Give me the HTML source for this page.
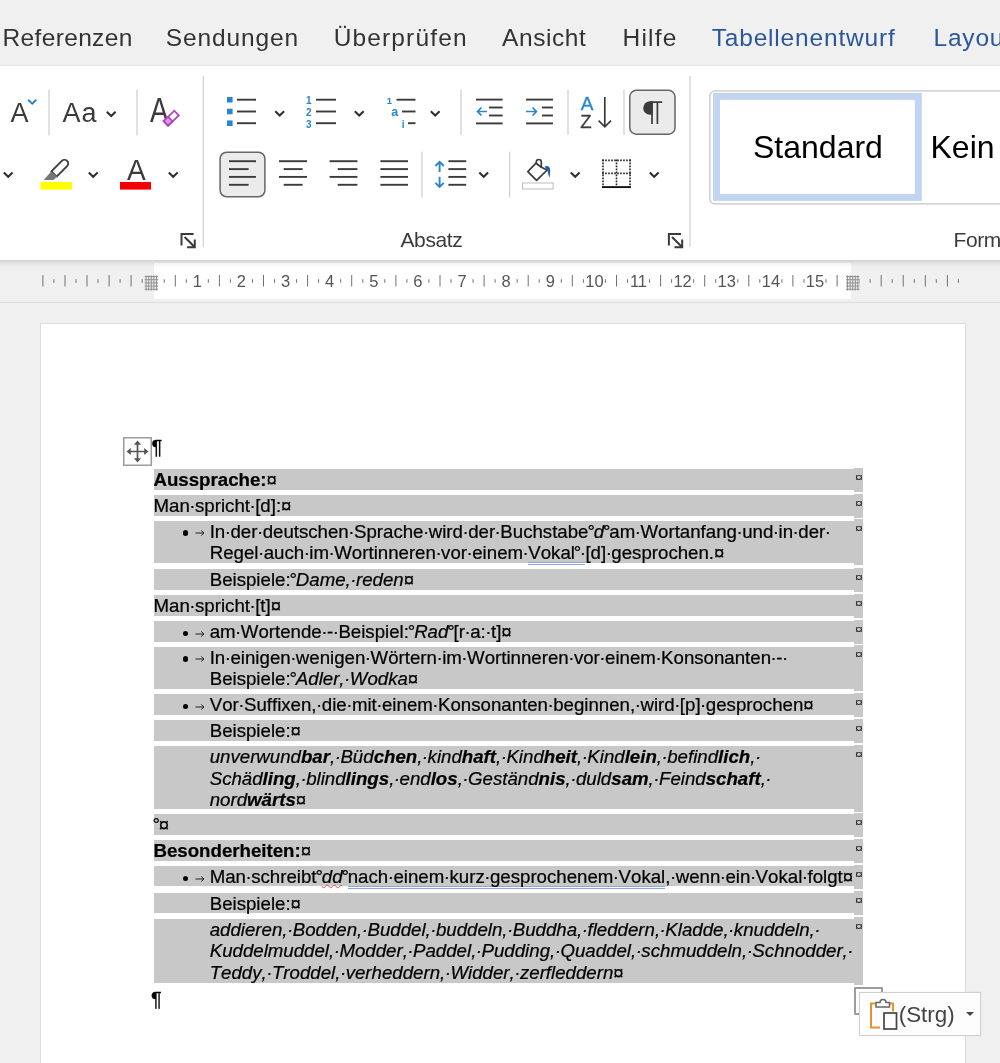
<!DOCTYPE html>
<html lang="de"><head><meta charset="utf-8"><title>Word</title>
<style>
html,body{margin:0;padding:0}
#wrap{position:absolute;left:0;top:0;width:1000px;height:1063px;overflow:hidden}
#doc{position:absolute;left:0;top:0;width:1000px;height:1063px}
#doc,#tabs,#rsvg,.glabel,.sty{opacity:0.999}
#ruler svg{will-change:transform}
body{width:1000px;height:1063px;overflow:hidden;background:#f0f0f0;position:relative;font-family:"Liberation Sans",sans-serif;color:#000}
#page{position:absolute;left:40px;top:323px;width:926px;height:760px;background:#fff;border:1px solid #dcdcdc;box-sizing:border-box}
.row{position:absolute;left:153.6px;width:700px;background:#c8c8c8}
.endc{position:absolute;left:853.6px;width:9.6px;background:#c8c8c8}
.em{position:absolute;left:1.300px;top:2.200px;font-size:11px;line-height:14px;color:#222;transform:scaleX(1.28);transform-origin:0 0;will-change:transform}
.ln{position:absolute;white-space:nowrap;font-kerning:none;-webkit-text-stroke:0.22px #000;font-size:18.67px;line-height:21.46px;height:21.46px}
.s{display:inline-block;margin:0 -0.0275em}
.n{display:inline-block;margin:0 -0.061em}
.bul{position:absolute;left:182.500px;width:5.600px;height:5.600px;border-radius:50%;background:#000}
.tab{position:absolute;left:195px}
u.g{text-decoration:none;border-bottom:3px double #8fa6da;padding-bottom:0;display:inline-block;line-height:16.500px}
i.w{text-decoration:underline wavy #e25555 1px;text-underline-offset:1px}
.pil{position:absolute;font-size:20px;line-height:20px;-webkit-text-stroke:0.3px #000}

#tabs{position:absolute;left:0;top:0;width:1000px;height:65.500px;background:#f0f0f0;border-bottom:1px solid #e6e6e6;box-sizing:border-box}
.tab-l{position:absolute;top:22.800px;font-size:24.500px;line-height:30px;color:#333;white-space:nowrap}
.tab-l.bl{color:#2b579a}
#ribbon{position:absolute;left:0;top:65.500px;width:1000px;height:194.500px;background:#fff;}
#rshadow{position:absolute;left:0;top:260px;width:1000px;height:8px;background:linear-gradient(rgba(0,0,0,.13),rgba(0,0,0,.04) 45%,rgba(0,0,0,0))}
#rsvg{position:absolute;left:0;top:0}
.glabel{position:absolute;top:228px;letter-spacing:-0.4px;font-size:21px;line-height:24px;color:#3b3b3b;white-space:nowrap}
.sty{position:absolute;top:128.500px;font-size:32px;line-height:36px;color:#000;white-space:nowrap}
#ruler{position:absolute;left:0;top:263px;width:1000px;height:38.500px;background:#f0f0f0;border-bottom:1px solid #dedede}
#rwhite{position:absolute;left:153.500px;top:0;width:697.700px;height:35.500px;background:#fff}
.mv{position:absolute;left:123px;top:437px;width:29px;height:29px}
.pbox{position:absolute;left:853.800px;top:986.600px;width:29.400px;height:28.600px;border:2px solid #9c9c9c;background:#fff;border-radius:1px;box-sizing:border-box}
.paste{position:absolute;left:859.200px;top:992.400px;width:120px;height:42px;border:1px solid #cfcfcf;background:#fdfdfd;box-shadow:0 0 2px rgba(0,0,0,.08)}
.strg{position:absolute;left:38.500px;top:8.600px;font-size:22.400px;line-height:26px;color:#444}
.tri{position:absolute;left:105.500px;top:19px;width:0;height:0;border-left:4.600px solid transparent;border-right:4.600px solid transparent;border-top:4.800px solid #444}
</style></head>
<body>
<div id="wrap">
<div id="page"></div>
<div id="doc">
<div class="mv"><svg width="29" height="29" viewBox="0 0 29 29"><rect x="0.750" y="0.750" width="27.500" height="27.500" fill="#fff" stroke="#9c9c9c" stroke-width="1.500"/><path d="M14.500 6v17M6 14.500h17" fill="none" stroke="#555" stroke-width="1.700"/><path d="M14.500 3.500l3.600 4.300h-7.200zM14.500 25.500l3.600-4.300h-7.200zM3.500 14.500l4.300-3.600v7.200zM25.500 14.500l-4.300-3.600v7.200z" fill="#555"/></svg></div>
<div class="pil" style="left:151.600px;top:437px">¶</div>
<div class="row" style="top:469.0px;height:20.6px"></div>
<div class="endc" style="top:467.7px;height:24.2px"><span class="em">¤</span></div>
<div class="ln" style="top:469.0px;left:153.5px"><b>Aussprache:</b>¤</div>
<div class="row" style="top:494.9px;height:20.7px"></div>
<div class="endc" style="top:493.6px;height:24.3px"><span class="em">¤</span></div>
<div class="ln" style="top:494.9px;left:153.5px">Man<span class="s">·</span>spricht<span class="s">·</span>[d]:¤</div>
<div class="row" style="top:520.6px;height:42.0px"></div>
<div class="endc" style="top:519.3px;height:45.6px"><span class="em">¤</span></div>
<span class="bul" style="top:530.4px"></span>
<svg class="tab" style="top:529.2px" width="10" height="8" viewBox="0 0 10 8"><path d="M0.500 4H9M6.200 1.500L9 4L6.200 6.500" fill="none" stroke="#222" stroke-width="1"/></svg>
<div class="ln" style="top:520.6px;left:209.7px">In<span class="s">·</span>der<span class="s">·</span>deutschen<span class="s">·</span>Sprache<span class="s">·</span>wird<span class="s">·</span>der<span class="s">·</span>Buchstabe<span class="n">°</span><i>d</i><span class="n">°</span>am<span class="s">·</span>Wortanfang<span class="s">·</span>und<span class="s">·</span>in<span class="s">·</span>der<span class="s">·</span></div>
<div class="ln" style="top:542.1px;left:209.7px">Regel<span class="s">·</span>auch<span class="s">·</span>im<span class="s">·</span>Wortinneren<span class="s">·</span>vor<span class="s">·</span>einem<span class="s">·</span><u class="g">Vokal<span class="n">°</span><span class="s">·</span></u>[d]<span class="s">·</span>gesprochen.¤</div>
<div class="row" style="top:569.0px;height:21.0px"></div>
<div class="endc" style="top:567.7px;height:24.6px"><span class="em">¤</span></div>
<div class="ln" style="top:569.0px;left:209.7px">Beispiele:<span class="n">°</span><i>Dame,<span class="s">·</span>reden</i>¤</div>
<div class="row" style="top:595.0px;height:21.0px"></div>
<div class="endc" style="top:593.7px;height:24.6px"><span class="em">¤</span></div>
<div class="ln" style="top:595.0px;left:153.5px">Man<span class="s">·</span>spricht<span class="s">·</span>[t]¤</div>
<div class="row" style="top:621.0px;height:20.6px"></div>
<div class="endc" style="top:619.7px;height:24.2px"><span class="em">¤</span></div>
<span class="bul" style="top:630.8px"></span>
<svg class="tab" style="top:629.6px" width="10" height="8" viewBox="0 0 10 8"><path d="M0.500 4H9M6.200 1.500L9 4L6.200 6.500" fill="none" stroke="#222" stroke-width="1"/></svg>
<div class="ln" style="top:621.0px;left:209.7px">am<span class="s">·</span>Wortende<span class="s">·</span>-<span class="s">·</span>Beispiel:<span class="n">°</span><i>Rad</i><span class="n">°</span>[r<span class="s">·</span>a:<span class="s">·</span>t]¤</div>
<div class="row" style="top:646.6px;height:42.4px"></div>
<div class="endc" style="top:645.3px;height:46.0px"><span class="em">¤</span></div>
<span class="bul" style="top:656.4px"></span>
<svg class="tab" style="top:655.2px" width="10" height="8" viewBox="0 0 10 8"><path d="M0.500 4H9M6.200 1.500L9 4L6.200 6.500" fill="none" stroke="#222" stroke-width="1"/></svg>
<div class="ln" style="top:646.6px;left:209.7px">In<span class="s">·</span>einigen<span class="s">·</span>wenigen<span class="s">·</span>Wörtern<span class="s">·</span>im<span class="s">·</span>Wortinneren<span class="s">·</span>vor<span class="s">·</span>einem<span class="s">·</span>Konsonanten<span class="s">·</span>-<span class="s">·</span></div>
<div class="ln" style="top:668.1px;left:209.7px">Beispiele:<span class="n">°</span><i>Adler,<span class="s">·</span>Wodka</i>¤</div>
<div class="row" style="top:694.0px;height:21.0px"></div>
<div class="endc" style="top:692.7px;height:24.6px"><span class="em">¤</span></div>
<span class="bul" style="top:703.8px"></span>
<svg class="tab" style="top:702.6px" width="10" height="8" viewBox="0 0 10 8"><path d="M0.500 4H9M6.200 1.500L9 4L6.200 6.500" fill="none" stroke="#222" stroke-width="1"/></svg>
<div class="ln" style="top:694.0px;left:209.7px">Vor<span class="s">·</span>Suffixen,<span class="s">·</span>die<span class="s">·</span>mit<span class="s">·</span>einem<span class="s">·</span>Konsonanten<span class="s">·</span>beginnen,<span class="s">·</span>wird<span class="s">·</span>[p]<span class="s">·</span>gesprochen¤</div>
<div class="row" style="top:720.0px;height:21.0px"></div>
<div class="endc" style="top:718.7px;height:24.6px"><span class="em">¤</span></div>
<div class="ln" style="top:720.0px;left:209.7px">Beispiele:¤</div>
<div class="row" style="top:746.0px;height:63.3px"></div>
<div class="endc" style="top:744.7px;height:66.9px"><span class="em">¤</span></div>
<div class="ln" style="top:746.0px;left:209.7px"><i>unverwund<b>bar</b>,<span class="s">·</span>Büd<b>chen</b>,<span class="s">·</span>kind<b>haft</b>,<span class="s">·</span>Kind<b>heit</b>,<span class="s">·</span>Kind<b>lein</b>,<span class="s">·</span>befind<b>lich</b>,<span class="s">·</span></i></div>
<div class="ln" style="top:767.5px;left:209.7px"><i>Schäd<b>ling</b>,<span class="s">·</span>blind<b>lings</b>,<span class="s">·</span>end<b>los</b>,<span class="s">·</span>Geständ<b>nis</b>,<span class="s">·</span>duld<b>sam</b>,<span class="s">·</span>Feind<b>schaft</b>,<span class="s">·</span></i></div>
<div class="ln" style="top:788.9px;left:209.7px"><i>nord<b>wärts</b></i>¤</div>
<div class="row" style="top:814.3px;height:20.5px"></div>
<div class="endc" style="top:813.0px;height:24.1px"><span class="em">¤</span></div>
<div class="ln" style="top:814.3px;left:153.5px"><span class="n">°</span>¤</div>
<div class="row" style="top:840.1px;height:20.7px"></div>
<div class="endc" style="top:838.8px;height:24.3px"><span class="em">¤</span></div>
<div class="ln" style="top:840.1px;left:153.5px"><b>Besonderheiten:</b>¤</div>
<div class="row" style="top:866.1px;height:20.4px"></div>
<div class="endc" style="top:864.8px;height:24.0px"><span class="em">¤</span></div>
<span class="bul" style="top:875.9px"></span>
<svg class="tab" style="top:874.7px" width="10" height="8" viewBox="0 0 10 8"><path d="M0.500 4H9M6.200 1.500L9 4L6.200 6.500" fill="none" stroke="#222" stroke-width="1"/></svg>
<div class="ln" style="top:866.1px;left:209.7px">Man<span class="s">·</span>schreibt<span class="n">°</span><i class="w">dd</i><span class="n">°</span><u class="g">nach<span class="s">·</span>einem<span class="s">·</span>kurz<span class="s">·</span>gesprochenem<span class="s">·</span>Vokal</u>,<span class="s">·</span>wenn<span class="s">·</span>ein<span class="s">·</span>Vokal<span class="s">·</span>folgt¤</div>
<div class="row" style="top:892.5px;height:20.7px"></div>
<div class="endc" style="top:891.2px;height:24.3px"><span class="em">¤</span></div>
<div class="ln" style="top:892.5px;left:209.7px">Beispiele:¤</div>
<div class="row" style="top:918.6px;height:64.0px"></div>
<div class="endc" style="top:917.3px;height:67.6px"><span class="em">¤</span></div>
<div class="ln" style="top:918.6px;left:209.7px"><i>addieren,<span class="s">·</span>Bodden,<span class="s">·</span>Buddel,<span class="s">·</span>buddeln,<span class="s">·</span>Buddha,<span class="s">·</span>fleddern,<span class="s">·</span>Kladde,<span class="s">·</span>knuddeln,<span class="s">·</span></i></div>
<div class="ln" style="top:940.1px;left:209.7px"><i>Kuddelmuddel,<span class="s">·</span>Modder,<span class="s">·</span>Paddel,<span class="s">·</span>Pudding,<span class="s">·</span>Quaddel,<span class="s">·</span>schmuddeln,<span class="s">·</span>Schnodder,<span class="s">·</span></i></div>
<div class="ln" style="top:961.5px;left:209.7px"><i>Teddy,<span class="s">·</span>Troddel,<span class="s">·</span>verheddern,<span class="s">·</span>Widder,<span class="s">·</span>zerfleddern</i>¤</div>
<div class="pil" style="left:151px;top:989px">¶</div>
<div class="pbox"></div>
<div class="paste"><svg width="30" height="34" viewBox="0 0 30 34" style="position:absolute;left:8px;top:4px"><path d="M8 6.500H3v24h9" fill="none" stroke="#e8912d" stroke-width="2"/><path d="M19 6.500h6v8" fill="none" stroke="#e8912d" stroke-width="2"/><path d="M8 10V5.500h4a3 3 0 0 1 6 0H21.500v4.500z" fill="#fff" stroke="#666" stroke-width="1.500"/><rect x="16" y="16" width="12.500" height="16" fill="#fff" stroke="#444" stroke-width="1.700"/></svg><span class="strg">(Strg)</span><span class="tri"></span></div>
</div>
<div id="ruler"><div id="rwhite"></div><svg width="1000" height="40" viewBox="0 0 1000 40" style="position:absolute;left:0;top:0" font-family="Liberation Sans, sans-serif"><path d="M42.9 12V23.500" stroke="#707070" stroke-width="1"/><path d="M53.9 16.200V19.800" stroke="#707070" stroke-width="1"/><path d="M65.0 12V23.500" stroke="#707070" stroke-width="1"/><path d="M76.0 16.200V19.800" stroke="#707070" stroke-width="1"/><path d="M87.0 12V23.500" stroke="#707070" stroke-width="1"/><path d="M98.0 16.200V19.800" stroke="#707070" stroke-width="1"/><path d="M109.1 12V23.500" stroke="#707070" stroke-width="1"/><path d="M120.1 16.200V19.800" stroke="#707070" stroke-width="1"/><path d="M131.1 12V23.500" stroke="#707070" stroke-width="1"/><path d="M142.2 16.200V19.800" stroke="#707070" stroke-width="1"/><path d="M153.2 16.200V19.800" stroke="#707070" stroke-width="1"/><path d="M164.2 16.200V19.800" stroke="#707070" stroke-width="1"/><path d="M175.3 12V23.500" stroke="#707070" stroke-width="1"/><path d="M186.3 16.200V19.800" stroke="#707070" stroke-width="1"/><text x="197.3" y="24.200" font-size="16.500" text-anchor="middle" fill="#555">1</text><path d="M208.3 16.200V19.800" stroke="#707070" stroke-width="1"/><path d="M219.4 12V23.500" stroke="#707070" stroke-width="1"/><path d="M230.4 16.200V19.800" stroke="#707070" stroke-width="1"/><text x="241.4" y="24.200" font-size="16.500" text-anchor="middle" fill="#555">2</text><path d="M252.5 16.200V19.800" stroke="#707070" stroke-width="1"/><path d="M263.5 12V23.500" stroke="#707070" stroke-width="1"/><path d="M274.5 16.200V19.800" stroke="#707070" stroke-width="1"/><text x="285.6" y="24.200" font-size="16.500" text-anchor="middle" fill="#555">3</text><path d="M296.6 16.200V19.800" stroke="#707070" stroke-width="1"/><path d="M307.6 12V23.500" stroke="#707070" stroke-width="1"/><path d="M318.6 16.200V19.800" stroke="#707070" stroke-width="1"/><text x="329.7" y="24.200" font-size="16.500" text-anchor="middle" fill="#555">4</text><path d="M340.7 16.200V19.800" stroke="#707070" stroke-width="1"/><path d="M351.7 12V23.500" stroke="#707070" stroke-width="1"/><path d="M362.8 16.200V19.800" stroke="#707070" stroke-width="1"/><text x="373.8" y="24.200" font-size="16.500" text-anchor="middle" fill="#555">5</text><path d="M384.8 16.200V19.800" stroke="#707070" stroke-width="1"/><path d="M395.9 12V23.500" stroke="#707070" stroke-width="1"/><path d="M406.9 16.200V19.800" stroke="#707070" stroke-width="1"/><text x="417.9" y="24.200" font-size="16.500" text-anchor="middle" fill="#555">6</text><path d="M428.9 16.200V19.800" stroke="#707070" stroke-width="1"/><path d="M440.0 12V23.500" stroke="#707070" stroke-width="1"/><path d="M451.0 16.200V19.800" stroke="#707070" stroke-width="1"/><text x="462.0" y="24.200" font-size="16.500" text-anchor="middle" fill="#555">7</text><path d="M473.1 16.200V19.800" stroke="#707070" stroke-width="1"/><path d="M484.1 12V23.500" stroke="#707070" stroke-width="1"/><path d="M495.1 16.200V19.800" stroke="#707070" stroke-width="1"/><text x="506.2" y="24.200" font-size="16.500" text-anchor="middle" fill="#555">8</text><path d="M517.2 16.200V19.800" stroke="#707070" stroke-width="1"/><path d="M528.2 12V23.500" stroke="#707070" stroke-width="1"/><path d="M539.2 16.200V19.800" stroke="#707070" stroke-width="1"/><text x="550.3" y="24.200" font-size="16.500" text-anchor="middle" fill="#555">9</text><path d="M561.3 16.200V19.800" stroke="#707070" stroke-width="1"/><path d="M572.3 12V23.500" stroke="#707070" stroke-width="1"/><path d="M583.4 16.200V19.800" stroke="#707070" stroke-width="1"/><text x="594.4" y="24.200" font-size="16.500" text-anchor="middle" fill="#555">10</text><path d="M605.4 16.200V19.800" stroke="#707070" stroke-width="1"/><path d="M616.5 12V23.500" stroke="#707070" stroke-width="1"/><path d="M627.5 16.200V19.800" stroke="#707070" stroke-width="1"/><text x="638.5" y="24.200" font-size="16.500" text-anchor="middle" fill="#555">11</text><path d="M649.5 16.200V19.800" stroke="#707070" stroke-width="1"/><path d="M660.6 12V23.500" stroke="#707070" stroke-width="1"/><path d="M671.6 16.200V19.800" stroke="#707070" stroke-width="1"/><text x="682.6" y="24.200" font-size="16.500" text-anchor="middle" fill="#555">12</text><path d="M693.7 16.200V19.800" stroke="#707070" stroke-width="1"/><path d="M704.7 12V23.500" stroke="#707070" stroke-width="1"/><path d="M715.7 16.200V19.800" stroke="#707070" stroke-width="1"/><text x="726.8" y="24.200" font-size="16.500" text-anchor="middle" fill="#555">13</text><path d="M737.8 16.200V19.800" stroke="#707070" stroke-width="1"/><path d="M748.8 12V23.500" stroke="#707070" stroke-width="1"/><path d="M759.8 16.200V19.800" stroke="#707070" stroke-width="1"/><text x="770.9" y="24.200" font-size="16.500" text-anchor="middle" fill="#555">14</text><path d="M781.9 16.200V19.800" stroke="#707070" stroke-width="1"/><path d="M792.9 12V23.500" stroke="#707070" stroke-width="1"/><path d="M804.0 16.200V19.800" stroke="#707070" stroke-width="1"/><text x="815.0" y="24.200" font-size="16.500" text-anchor="middle" fill="#555">15</text><path d="M826.0 16.200V19.800" stroke="#707070" stroke-width="1"/><path d="M837.1 12V23.500" stroke="#707070" stroke-width="1"/><path d="M848.1 16.200V19.800" stroke="#707070" stroke-width="1"/><path d="M859.1 16.200V19.800" stroke="#707070" stroke-width="1"/><path d="M870.1 16.200V19.800" stroke="#707070" stroke-width="1"/><path d="M881.2 12V23.500" stroke="#707070" stroke-width="1"/><path d="M892.2 16.200V19.800" stroke="#707070" stroke-width="1"/><path d="M903.2 12V23.500" stroke="#707070" stroke-width="1"/><path d="M914.3 16.200V19.800" stroke="#707070" stroke-width="1"/><path d="M925.3 12V23.500" stroke="#707070" stroke-width="1"/><path d="M936.3 16.200V19.800" stroke="#707070" stroke-width="1"/><path d="M947.4 12V23.500" stroke="#707070" stroke-width="1"/><path d="M958.4 16.200V19.800" stroke="#707070" stroke-width="1"/><rect x="144.6" y="12.500" width="13.500" height="15" fill="#e9e9e9"/><path d="M146.1 12.500V27.500" stroke="#8c8c8c" stroke-width="0.9"/><path d="M148.7 12.500V27.500" stroke="#8c8c8c" stroke-width="0.9"/><path d="M151.3 12.500V27.500" stroke="#8c8c8c" stroke-width="0.9"/><path d="M153.9 12.500V27.500" stroke="#8c8c8c" stroke-width="0.9"/><path d="M156.5 12.500V27.500" stroke="#8c8c8c" stroke-width="0.9"/><path d="M144.6 13.5H158.1" stroke="#8c8c8c" stroke-width="0.9"/><path d="M144.6 16.7H158.1" stroke="#8c8c8c" stroke-width="0.9"/><path d="M144.6 19.9H158.1" stroke="#8c8c8c" stroke-width="0.9"/><path d="M144.6 23.1H158.1" stroke="#8c8c8c" stroke-width="0.9"/><path d="M144.6 26.3H158.1" stroke="#8c8c8c" stroke-width="0.9"/><rect x="846" y="12.500" width="13.500" height="15" fill="#e9e9e9"/><path d="M847.5 12.500V27.500" stroke="#8c8c8c" stroke-width="0.9"/><path d="M850.1 12.500V27.500" stroke="#8c8c8c" stroke-width="0.9"/><path d="M852.7 12.500V27.500" stroke="#8c8c8c" stroke-width="0.9"/><path d="M855.3 12.500V27.500" stroke="#8c8c8c" stroke-width="0.9"/><path d="M857.9 12.500V27.500" stroke="#8c8c8c" stroke-width="0.9"/><path d="M846 13.5H859.5" stroke="#8c8c8c" stroke-width="0.9"/><path d="M846 16.7H859.5" stroke="#8c8c8c" stroke-width="0.9"/><path d="M846 19.9H859.5" stroke="#8c8c8c" stroke-width="0.9"/><path d="M846 23.1H859.5" stroke="#8c8c8c" stroke-width="0.9"/><path d="M846 26.3H859.5" stroke="#8c8c8c" stroke-width="0.9"/></svg></div>
<div id="ribbon"></div><div id="rshadow"></div><svg id="rsvg" width="1000" height="262" viewBox="0 0 1000 262" font-family="Liberation Sans, sans-serif"><text x="10.5" y="122" font-size="27" fill="#3b3b3b">A</text><path d="M28.1 99.7l4.1 3.9l4.1 -3.9" fill="none" stroke="#2a84cc" stroke-width="2.0"/><path d="M49 89.5V135.5" stroke="#d2d2d2" stroke-width="1.3"/><text x="62.5" y="122" font-size="27" fill="#3b3b3b" letter-spacing="1">Aa</text><path d="M106.8 111.7l4.4 4.3l4.4 -4.3" fill="none" stroke="#2e2e2e" stroke-width="2.0"/><path d="M137 89.5V135.5" stroke="#d2d2d2" stroke-width="1.3"/><text x="0" y="122" font-size="34.500" fill="#3b3b3b" transform="translate(150 0) scale(0.8 1)">A</text><g transform="translate(171.200 118.200) rotate(-43.500)"><rect x="-7.400" y="-3.200" width="14.800" height="6.400" fill="#fff" stroke="#b146c2" stroke-width="1.800"/><rect x="-7.400" y="-3.200" width="6.200" height="6.400" fill="#d99be3" stroke="#b146c2" stroke-width="1.800"/></g><path d="M3.8 172.5l4.4 4.3l4.4 -4.3" fill="none" stroke="#2e2e2e" stroke-width="2.0"/><path transform="translate(54 174) rotate(45)" d="M-3.700 0V-14.800a3.700 3.700 0 0 1 7.400 0V0z" fill="#fff" stroke="#3b3b3b" stroke-width="1.900" stroke-linejoin="round"/><path d="M51.200 171.600L57.200 176.600L53.400 180H43.600z" fill="#777"/><rect x="40.500" y="182" width="31.500" height="7.600" fill="#ffff00"/><path d="M88.8 172.5l4.4 4.3l4.4 -4.3" fill="none" stroke="#2e2e2e" stroke-width="2.0"/><text x="0" y="180" font-size="29" fill="#3b3b3b" transform="translate(127 0) scale(0.97 1)">A</text><rect x="120" y="182" width="31" height="7.600" fill="#f50000"/><path d="M168.8 172.5l4.4 4.3l4.4 -4.3" fill="none" stroke="#2e2e2e" stroke-width="2.0"/><path d="M193.6 233.9H181.5V245.5" fill="none" stroke="#3b3b3b" stroke-width="2"/><path d="M184.6 237L194.6 247M194.79999999999998 239.5V247.2H187.1" fill="none" stroke="#3b3b3b" stroke-width="2"/><path d="M203.3 76V247" stroke="#d2d2d2" stroke-width="1.3"/><rect x="227" y="96.9" width="5.600" height="5.600" fill="#2886d0"/><path d="M237 99.7H256" stroke="#3b3b3b" stroke-width="1.9"/><rect x="227" y="108.7" width="5.600" height="5.600" fill="#2886d0"/><path d="M237 111.5H256" stroke="#3b3b3b" stroke-width="1.9"/><rect x="227" y="120.4" width="5.600" height="5.600" fill="#2886d0"/><path d="M237 123.2H256" stroke="#3b3b3b" stroke-width="1.9"/><path d="M275.3 111.2l4.4 4.3l4.4 -4.3" fill="none" stroke="#2e2e2e" stroke-width="2.0"/><text x="306" y="104.1" font-size="10" font-weight="bold" fill="#2886d0">1</text><path d="M316 99.7H336" stroke="#3b3b3b" stroke-width="1.9"/><text x="306" y="115.9" font-size="10" font-weight="bold" fill="#2886d0">2</text><path d="M316 111.5H336" stroke="#3b3b3b" stroke-width="1.9"/><text x="306" y="127.6" font-size="10" font-weight="bold" fill="#2886d0">3</text><path d="M316 123.2H336" stroke="#3b3b3b" stroke-width="1.9"/><path d="M354.8 111.2l4.4 4.3l4.4 -4.3" fill="none" stroke="#2e2e2e" stroke-width="2.0"/><text x="386.800" y="104.300" font-size="9.500" font-weight="bold" fill="#2886d0">1</text><path d="M396.5 99.7H415.5" stroke="#3b3b3b" stroke-width="1.9"/><text x="391.300" y="116.200" font-size="12.500" font-weight="bold" fill="#2886d0">a</text><path d="M402 111.5H415.5" stroke="#3b3b3b" stroke-width="1.9"/><text x="401.800" y="127.500" font-size="10" font-weight="bold" fill="#2886d0">i</text><path d="M408 123.2H415.5" stroke="#3b3b3b" stroke-width="1.9"/><path d="M430.8 111.2l4.4 4.3l4.4 -4.3" fill="none" stroke="#2e2e2e" stroke-width="2.0"/><path d="M461 89.5V135" stroke="#d2d2d2" stroke-width="1.3"/><path d="M476 99.6H502.6" stroke="#3b3b3b" stroke-width="1.9"/><path d="M476 123.4H502.6" stroke="#3b3b3b" stroke-width="1.9"/><path d="M489 107.5H502.6" stroke="#3b3b3b" stroke-width="1.9"/><path d="M489 115.5H502.6" stroke="#3b3b3b" stroke-width="1.9"/><path d="M487 111.500H477.500M481.500 107.500l-4 4l4 4" fill="none" stroke="#2886d0" stroke-width="1.7"/><path d="M526 99.6H553" stroke="#3b3b3b" stroke-width="1.9"/><path d="M526 123.4H553" stroke="#3b3b3b" stroke-width="1.9"/><path d="M542 107.5H553" stroke="#3b3b3b" stroke-width="1.9"/><path d="M542 115.5H553" stroke="#3b3b3b" stroke-width="1.9"/><path d="M526 111.500H536.500M532.500 107.500l4 4l-4 4" fill="none" stroke="#2886d0" stroke-width="1.7"/><path d="M568 89.5V135" stroke="#d2d2d2" stroke-width="1.3"/><text x="580.700" y="110.200" font-size="19" fill="#2886d0" stroke="#2886d0" stroke-width="0.35">A</text><text x="580.200" y="127.600" font-size="18.600" fill="#3b3b3b" stroke="#3b3b3b" stroke-width="0.3">Z</text><path d="M604.800 97V126.600M598.600 120.600l6.200 6.200l6.200-6.200" fill="none" stroke="#3b3b3b" stroke-width="1.7"/><path d="M624 89.5V135" stroke="#d2d2d2" stroke-width="1.3"/><rect x="629.800" y="90.300" width="45.200" height="43.900" rx="6.500" fill="#ebebeb" stroke="#666" stroke-width="1.5"/><path d="M652.800 101.200H650a6.800 6.800 0 0 0 0 13.600H652.800z" fill="#3b3b3b"/><path d="M650 102.100H662.200M652 101.200V124M657.400 101.200V124" fill="none" stroke="#3b3b3b" stroke-width="1.7"/><path d="M690 76V247" stroke="#d2d2d2" stroke-width="1.3"/><rect x="220.100" y="152.200" width="44.800" height="44.600" rx="6.500" fill="#ebebeb" stroke="#666" stroke-width="1.5"/><path d="M229 161.2H256" stroke="#3b3b3b" stroke-width="1.9"/><path d="M229 169.1H248.6" stroke="#3b3b3b" stroke-width="1.9"/><path d="M229 176.9H256" stroke="#3b3b3b" stroke-width="1.9"/><path d="M229 184.8H248.6" stroke="#3b3b3b" stroke-width="1.9"/><path d="M279 161.2H307" stroke="#3b3b3b" stroke-width="1.9"/><path d="M283.7 169.1H302.6" stroke="#3b3b3b" stroke-width="1.9"/><path d="M279 176.9H307" stroke="#3b3b3b" stroke-width="1.9"/><path d="M283.7 184.8H302.6" stroke="#3b3b3b" stroke-width="1.9"/><path d="M329.6 161.2H357.4" stroke="#3b3b3b" stroke-width="1.9"/><path d="M337.7 169.1H357.4" stroke="#3b3b3b" stroke-width="1.9"/><path d="M329.6 176.9H357.4" stroke="#3b3b3b" stroke-width="1.9"/><path d="M337.7 184.8H357.4" stroke="#3b3b3b" stroke-width="1.9"/><path d="M380.4 161.2H408" stroke="#3b3b3b" stroke-width="1.9"/><path d="M380.4 169.1H408" stroke="#3b3b3b" stroke-width="1.9"/><path d="M380.4 176.9H408" stroke="#3b3b3b" stroke-width="1.9"/><path d="M380.4 184.8H408" stroke="#3b3b3b" stroke-width="1.9"/><path d="M422 151.5V197.4" stroke="#d2d2d2" stroke-width="1.3"/><path d="M448.4 161.2H466.2" stroke="#3b3b3b" stroke-width="1.9"/><path d="M448.4 169.1H466.2" stroke="#3b3b3b" stroke-width="1.9"/><path d="M448.4 176.9H466.2" stroke="#3b3b3b" stroke-width="1.9"/><path d="M448.4 184.8H466.2" stroke="#3b3b3b" stroke-width="1.9"/><path d="M439.600 161.800V172M435.400 166l4.200-4.200l4.200 4.200M439.600 176.800V187M435.400 182.800l4.200 4.200l4.200-4.200" fill="none" stroke="#2886d0" stroke-width="1.9"/><path d="M479.3 172.5l4.4 4.3l4.4 -4.3" fill="none" stroke="#2e2e2e" stroke-width="2.0"/><path d="M509.6 151.5V197.4" stroke="#d2d2d2" stroke-width="1.3"/><path d="M527.800 171.600L536 163.200L541.300 167.200L547.200 170L536.600 180.400z" fill="#fff" stroke="#3b3b3b" stroke-width="1.7" stroke-linejoin="round"/><path d="M536.300 164V162a2.500 2.500 0 0 1 5 0V167.500" fill="none" stroke="#3b3b3b" stroke-width="1.7"/><path d="M544.600 166.600c2.600-1.800 5.800 0 5.600 3.800c-.1 2.200-.5 4.600-.3 7.400c-1.800-2.300-1.700-5.200-2.400-6.900c-.6-1.500-1.700-2.700-2.900-4.300z" fill="#1e5fa8"/><rect x="522.500" y="183" width="30.600" height="6" fill="#fff" stroke="#bdbdbd" stroke-width="1"/><path d="M570.8 172.5l4.4 4.3l4.4 -4.3" fill="none" stroke="#2e2e2e" stroke-width="2.0"/><path d="M602.200 160.400H630.800M602.200 173.400H630.800" fill="none" stroke="#222" stroke-width="1.600" stroke-dasharray="1.600 1.400"/><path d="M603 159.600V185.200M616.500 159.600V185.200M630 159.600V185.200" fill="none" stroke="#222" stroke-width="1.600" stroke-dasharray="1.600 1.400"/><path d="M602 187.1H631" stroke="#111" stroke-width="1.9"/><path d="M649.8 172.5l4.4 4.3l4.4 -4.3" fill="none" stroke="#2e2e2e" stroke-width="2.0"/><path d="M681 233.9H668.9V245.5" fill="none" stroke="#3b3b3b" stroke-width="2"/><path d="M672 237L682 247M682.2 239.5V247.2H674.5" fill="none" stroke="#3b3b3b" stroke-width="2"/><rect x="709.900" y="90.900" width="320" height="113" rx="5" fill="#fff" stroke="#c6c6c6" stroke-width="1.3"/><rect x="716.500" y="96.400" width="201.800" height="101" fill="#fff" stroke="#c1d4f1" stroke-width="7"/></svg><div class="glabel" style="left:400.500px">Absatz</div><div class="glabel" style="left:953.500px">Formatvorlagen</div><div class="sty" style="left:753px">Standard</div><div class="sty" style="left:930.500px">Kein Leerraum</div>
<div id="tabs"><span class="tab-l" style="left:2.5px;letter-spacing:0.35px">Referenzen</span><span class="tab-l" style="left:165.8px;letter-spacing:0.87px">Sendungen</span><span class="tab-l" style="left:333.7px;letter-spacing:1.14px">Überprüfen</span><span class="tab-l" style="left:502.0px;letter-spacing:0.59px">Ansicht</span><span class="tab-l" style="left:622.5px;letter-spacing:1.2px">Hilfe</span><span class="tab-l bl" style="left:711.7px;letter-spacing:0.82px">Tabellenentwurf</span><span class="tab-l bl" style="left:933.5px;letter-spacing:0.8px">Layout</span></div>
</div>
</body></html>
